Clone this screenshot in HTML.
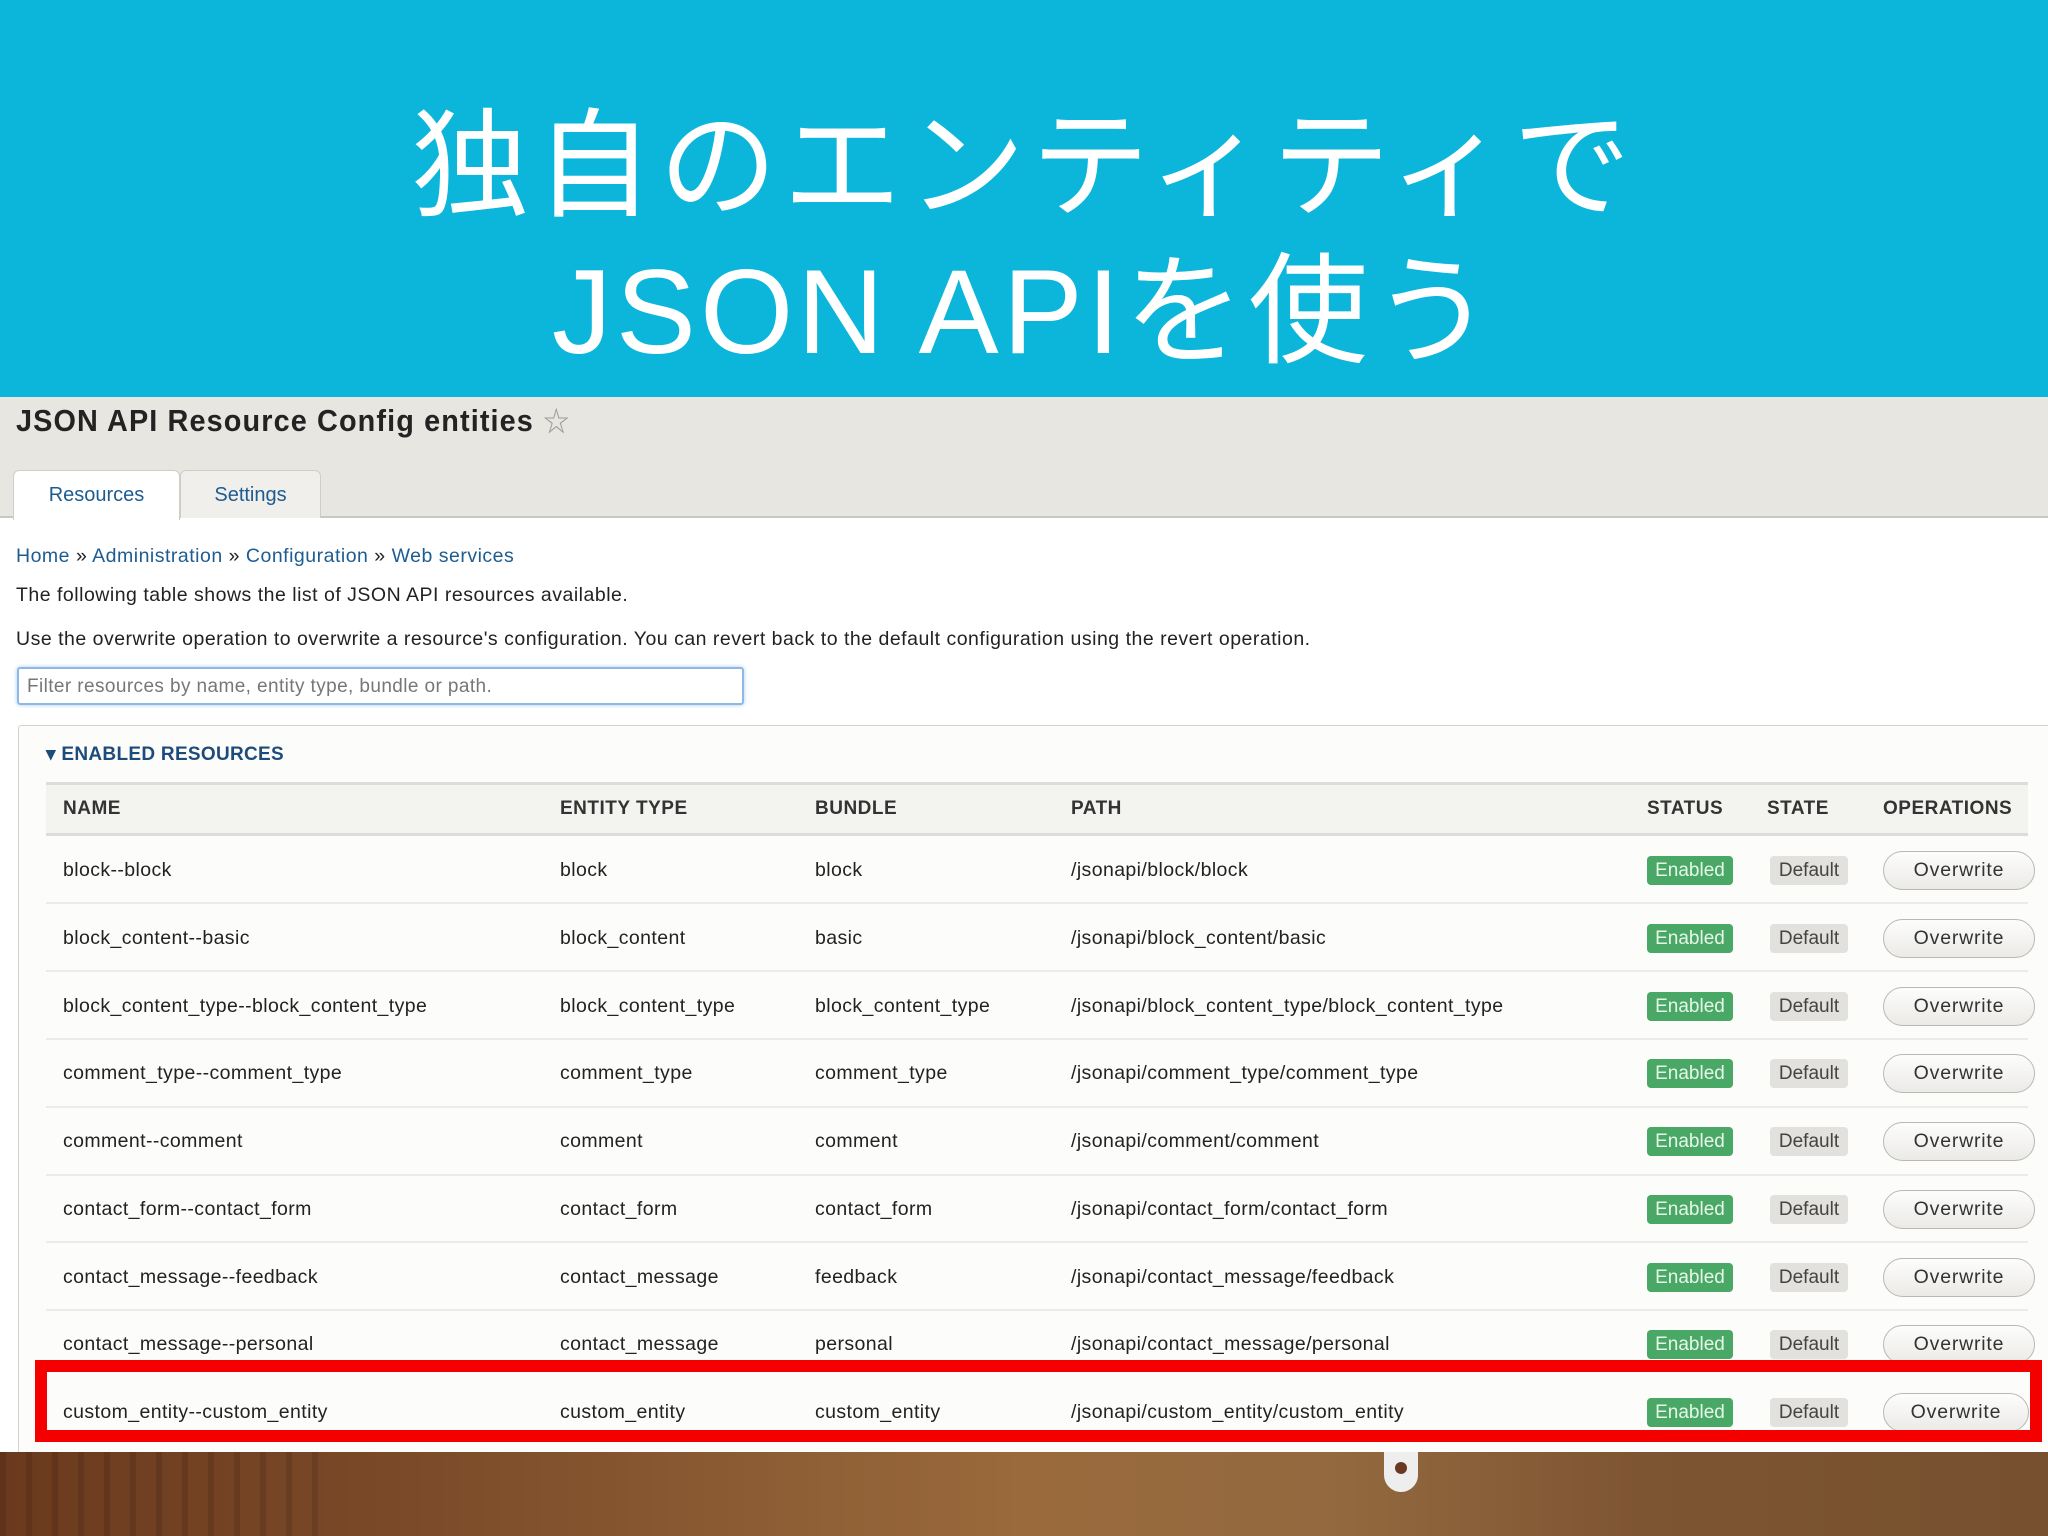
<!DOCTYPE html>
<html><head><meta charset="utf-8"><style>
*{margin:0;padding:0;box-sizing:border-box}
body{width:2048px;height:1536px;overflow:hidden;background:#fff;font-family:"Liberation Sans","Noto Sans CJK JP",sans-serif;position:relative;color:#222}
.blue{position:absolute;left:0;top:0;width:2048px;height:397px;background:#0cb6da;color:#fff;text-align:center}
.t1,.t2{position:absolute;left:0;width:2048px;text-align:center;font-family:"Liberation Sans","Noto Sans CJK JP",sans-serif;font-size:118px;line-height:1;letter-spacing:6px}
.t1{top:108px}.t2{top:252px;font-size:120px;letter-spacing:4px}
.gray{position:absolute;left:0;top:397px;width:2048px;height:121px;background:#e8e6e1;border-bottom:2px solid #c9c7c2}
.ptitle{position:absolute;left:16px;top:400px;font-size:31px;color:#232323;letter-spacing:1.2px;font-weight:bold;transform:scaleX(.93);transform-origin:left}
.star{color:#999;font-size:28px;margin-left:10px;font-weight:normal}
.tab{position:absolute;top:470px;height:50px;border:1px solid #cfcdc8;border-bottom:none;border-radius:6px 6px 0 0;font-size:20px;color:#1e5c90;text-align:center;line-height:48px}
.s{position:absolute;font-size:19.5px;letter-spacing:.5px;white-space:nowrap}
a{color:#1e5c90;text-decoration:none}
.inp{position:absolute;left:17px;top:667px;width:727px;height:38px;border:2px solid #8fb9e4;border-radius:3px;box-shadow:0 0 4px #a8cdf0;font-size:19px;color:#777;padding:7px 8px;letter-spacing:.4px}
.fs{position:absolute;left:18px;top:725px;width:2040px;height:730px;border:1px solid #d5d3ce;background:#fcfcfa;border-radius:3px}
.er{position:absolute;left:46px;top:743px;font-size:19px;font-weight:bold;color:#1e4c7a;letter-spacing:.3px}
.thead{position:absolute;left:46px;top:782px;width:1982px;height:54px;background:#f3f3f0;border-top:3px solid #dedcd8;border-bottom:3px solid #dedcd8}
.th{position:absolute;top:798px;font-size:19px;font-weight:bold;color:#333;letter-spacing:.5px}
.row{position:absolute;left:46px;width:1982px;height:68px;border-bottom:2px solid #ecebe8}
.c{position:absolute;font-size:19.5px;letter-spacing:.4px;color:#222;white-space:nowrap}
.en{position:absolute;left:1647px;width:86px;height:29px;background:#4aa866;border-radius:4px;color:#e8f6ea;font-size:19px;text-align:center;line-height:29px}
.de{position:absolute;left:1770px;width:78px;height:29px;background:#e2e1de;border-radius:4px;color:#444;font-size:19px;text-align:center;line-height:29px}
.ow{position:absolute;left:1883px;width:152px;height:39px;background:linear-gradient(#fdfdfc,#ebeae7);border:1px solid #b9b8b4;border-radius:20px;color:#333;font-size:19.5px;text-align:center;line-height:37px;letter-spacing:.8px}
.red{position:absolute;left:35px;top:1360px;width:2007px;height:82px;border:12px solid #f50000}
.photo{position:absolute;left:0;top:1452px;width:2048px;height:84px;background:
repeating-linear-gradient(90deg,rgba(0,0,0,.12) 0 6px,rgba(0,0,0,0) 6px 26px) 0 0/330px 84px no-repeat,
linear-gradient(90deg,#6b3a1e 0,#7b4a28 20%,#8a5a33 35%,#9a6a3c 50%,#93693f 65%,#7e5532 80%,#76502f 100%)}
</style></head><body>
<div class="blue">
<div class="t1">独自のエンティティで</div>
<div class="t2">JSON APIを使う</div>
</div>
<div class="gray"></div>
<div class="ptitle">JSON API Resource Config entities<span class="star">☆</span></div>
<div class="tab" style="left:13px;width:167px;background:#fff;height:50px">Resources</div>
<div class="tab" style="left:180px;width:141px;background:#f0efec;height:48px">Settings</div>
<div class="s" style="left:16px;top:545px"><a>Home</a> » <a>Administration</a> » <a>Configuration</a> » <a>Web services</a></div>
<div class="s" style="left:16px;top:584px">The following table shows the list of JSON API resources available.</div>
<div class="s" style="left:16px;top:628px">Use the overwrite operation to overwrite a resource's configuration. You can revert back to the default configuration using the revert operation.</div>
<div class="inp">Filter resources by name, entity type, bundle or path.</div>
<div class="fs"></div>
<div class="er">▾ ENABLED RESOURCES</div>
<div class="thead"></div>
<div class="th" style="left:63px">NAME</div>
<div class="th" style="left:560px">ENTITY TYPE</div>
<div class="th" style="left:815px">BUNDLE</div>
<div class="th" style="left:1071px">PATH</div>
<div class="th" style="left:1647px">STATUS</div>
<div class="th" style="left:1767px">STATE</div>
<div class="th" style="left:1883px">OPERATIONS</div>

<div class="row" style="top:836px"></div>
<div class="c" style="left:63px;top:859px">block--block</div><div class="c" style="left:560px;top:859px">block</div><div class="c" style="left:815px;top:859px">block</div><div class="c" style="left:1071px;top:859px">/jsonapi/block/block</div>
<div class="en" style="top:856px">Enabled</div><div class="de" style="top:856px">Default</div><div class="ow" style="top:851px">Overwrite</div>

<div class="row" style="top:904px"></div>
<div class="c" style="left:63px;top:927px">block_content--basic</div><div class="c" style="left:560px;top:927px">block_content</div><div class="c" style="left:815px;top:927px">basic</div><div class="c" style="left:1071px;top:927px">/jsonapi/block_content/basic</div>
<div class="en" style="top:924px">Enabled</div><div class="de" style="top:924px">Default</div><div class="ow" style="top:919px">Overwrite</div>

<div class="row" style="top:972px"></div>
<div class="c" style="left:63px;top:995px">block_content_type--block_content_type</div><div class="c" style="left:560px;top:995px">block_content_type</div><div class="c" style="left:815px;top:995px">block_content_type</div><div class="c" style="left:1071px;top:995px">/jsonapi/block_content_type/block_content_type</div>
<div class="en" style="top:992px">Enabled</div><div class="de" style="top:992px">Default</div><div class="ow" style="top:987px">Overwrite</div>

<div class="row" style="top:1040px"></div>
<div class="c" style="left:63px;top:1062px">comment_type--comment_type</div><div class="c" style="left:560px;top:1062px">comment_type</div><div class="c" style="left:815px;top:1062px">comment_type</div><div class="c" style="left:1071px;top:1062px">/jsonapi/comment_type/comment_type</div>
<div class="en" style="top:1059px">Enabled</div><div class="de" style="top:1059px">Default</div><div class="ow" style="top:1054px">Overwrite</div>

<div class="row" style="top:1108px"></div>
<div class="c" style="left:63px;top:1130px">comment--comment</div><div class="c" style="left:560px;top:1130px">comment</div><div class="c" style="left:815px;top:1130px">comment</div><div class="c" style="left:1071px;top:1130px">/jsonapi/comment/comment</div>
<div class="en" style="top:1127px">Enabled</div><div class="de" style="top:1127px">Default</div><div class="ow" style="top:1122px">Overwrite</div>

<div class="row" style="top:1175px"></div>
<div class="c" style="left:63px;top:1198px">contact_form--contact_form</div><div class="c" style="left:560px;top:1198px">contact_form</div><div class="c" style="left:815px;top:1198px">contact_form</div><div class="c" style="left:1071px;top:1198px">/jsonapi/contact_form/contact_form</div>
<div class="en" style="top:1195px">Enabled</div><div class="de" style="top:1195px">Default</div><div class="ow" style="top:1190px">Overwrite</div>

<div class="row" style="top:1243px"></div>
<div class="c" style="left:63px;top:1266px">contact_message--feedback</div><div class="c" style="left:560px;top:1266px">contact_message</div><div class="c" style="left:815px;top:1266px">feedback</div><div class="c" style="left:1071px;top:1266px">/jsonapi/contact_message/feedback</div>
<div class="en" style="top:1263px">Enabled</div><div class="de" style="top:1263px">Default</div><div class="ow" style="top:1258px">Overwrite</div>

<div class="row" style="top:1311px;border-bottom:none"></div>
<div class="c" style="left:63px;top:1333px">contact_message--personal</div><div class="c" style="left:560px;top:1333px">contact_message</div><div class="c" style="left:815px;top:1333px">personal</div><div class="c" style="left:1071px;top:1333px">/jsonapi/contact_message/personal</div>
<div class="en" style="top:1330px">Enabled</div><div class="de" style="top:1330px">Default</div><div class="ow" style="top:1325px">Overwrite</div>

<div class="c" style="left:63px;top:1401px">custom_entity--custom_entity</div><div class="c" style="left:560px;top:1401px">custom_entity</div><div class="c" style="left:815px;top:1401px">custom_entity</div><div class="c" style="left:1071px;top:1401px">/jsonapi/custom_entity/custom_entity</div>
<div class="en" style="top:1398px">Enabled</div><div class="de" style="top:1398px">Default</div><div class="ow" style="top:1393px;width:146px">Overwrite</div>
<div class="red"></div>
<div class="photo"></div>
<div style="position:absolute;left:1384px;top:1452px;width:34px;height:40px;border-radius:0 0 17px 17px;background:#eee"><div style="margin:10px auto;width:12px;height:12px;border-radius:6px;background:#6a3a20"></div></div>
</body></html>
